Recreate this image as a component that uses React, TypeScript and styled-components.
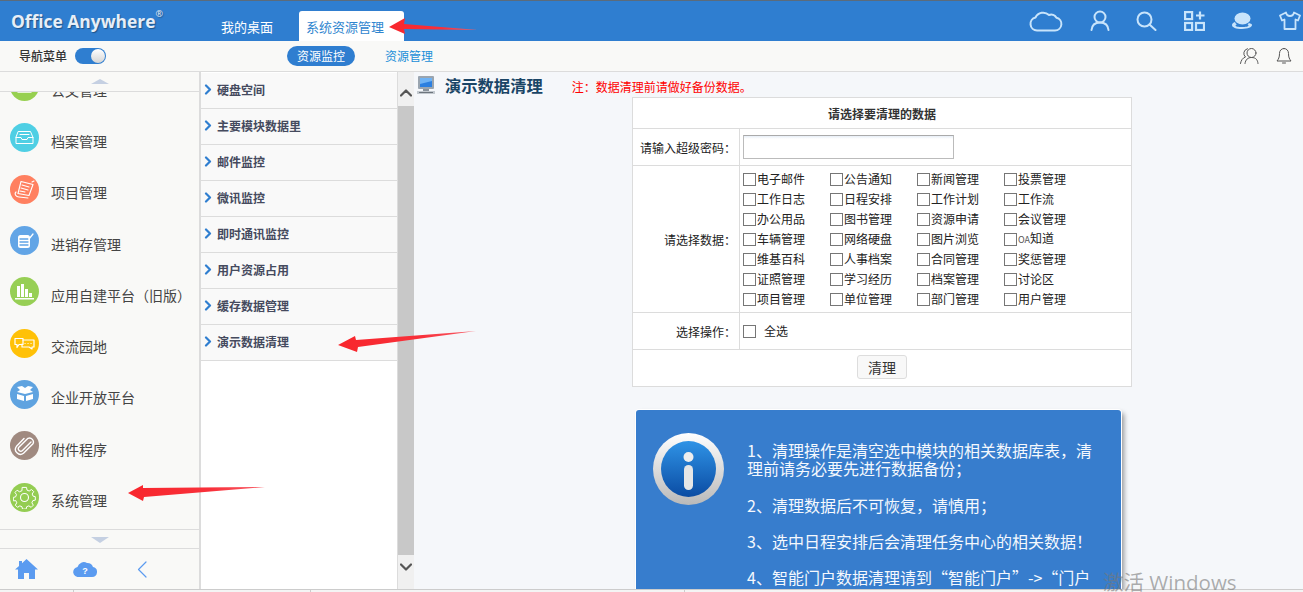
import React from "react";
import styled, { createGlobalStyle } from "styled-components";

const Global = createGlobalStyle`
  html, body { margin: 0; padding: 0; height: 100%; overflow: hidden; background: #f5f7fa; }
  body { font-family: "Noto Sans CJK SC", "Liberation Sans", sans-serif; font-size: 12px; color: #333; text-spacing-trim: space-all; }
  * { box-sizing: border-box; }
`;

const Page = styled.div`
  position: relative; width: 1303px; height: 592px; overflow: hidden;
  display: flex; flex-direction: column; border-top: 1px solid #5b6b7b;
`;
const Header = styled.header`
  height: 40px; flex: none; background: #2f7ed0; display: flex; align-items: flex-end;
`;
const Brand = styled.div`
  width: 206px; height: 40px; padding-left: 11px; display: flex; align-items: flex-start; padding-top: 7px;
  font-family: "Open Sans", "Liberation Sans", sans-serif; font-weight: 700; font-size: 17.4px; line-height: 26px;
  color: #e6eef8; text-shadow: 1px 1px 1px rgba(0,0,0,.35);
  sup { font-size: 9px; font-weight: 400; line-height: 10px; margin-top: 1px; }
`;
const Tab = styled.div<{ $active?: boolean }>`
  height: 30px; display: flex; align-items: center; font-size: 13px; line-height: 30px; padding-top: 1px;
  border-radius: 3px 3px 0 0;
  ${p => p.$active
    ? "width:105px; padding-left:7px; margin-left:11px; background:#fff; color:#2f86cf;"
    : "padding-left:15px; padding-right:15px; color:#fff;"}
`;
const HeaderIcons = styled.div`
  margin-left: auto; height: 40px; padding-right: 2px; display: flex; align-items: center; gap: 26.6px;
  color: #c8e4fb; padding-bottom: 1px;
  svg { display: block; }
`;
const SubBar = styled.div`
  height: 31px; flex: none; background: #f9f9f7; border-bottom: 1px solid #dcdcdc;
  display: flex; align-items: center; padding-left: 19px; padding-bottom: 1px;
`;
const NavLabel = styled.span`font-size: 12px; color: #333; font-weight: 500;`;
const Toggle = styled.div`
  width: 31px; height: 16px; margin-left: 8px; border-radius: 8px; background: #2f7ed0; position: relative;
  &::after { content: ""; position: absolute; right: 1px; top: 1px; width: 14px; height: 14px; border-radius: 50%;
    background: linear-gradient(#fff, #d5d5d5); }
`;
const Pill = styled.div<{ $active?: boolean }>`
  font-size: 12px; line-height: 20px; height: 20px; border-radius: 10px; text-align: center;
  ${p => p.$active
    ? "width:68px; margin-left:181px; background:#2f7ed0; color:#fff;"
    : "margin-left:30px; color:#1a8fd8;"}
`;
const SubIcons = styled.div`
  margin-left: auto; padding-right: 11px; display: flex; gap: 17px; color: #555; svg { display: block; }
`;
const Body = styled.div`flex: 1; min-height: 0; display: flex;`;

const Side = styled.aside`
  width: 200px; flex: none; background: #f9f9f7; border-right: 1px solid #dcdcdc; display: flex; flex-direction: column;
`;
const ArrowZone = styled.div<{ $down?: boolean }>`
  flex: none; display: flex; justify-content: center;
  ${p => p.$down
    ? "height:19px; padding-top:7px; border-top:1px solid #dcdcdc;"
    : "height:20px; padding-top:7px; border-bottom:1px solid #dcdcdc;"}
`;
const Tri = styled.div<{ $down?: boolean }>`
  width: 0; height: 0; border-left: 9px solid transparent; border-right: 9px solid transparent;
  ${p => p.$down ? "border-top: 6px solid #c5d0e2;" : "border-bottom: 5px solid #c5d0e2;"}
`;
const MenuWindow = styled.div`flex: 1; min-height: 0; overflow: hidden;`;
const MenuScroll = styled.div`margin-top: -28px;`;
const MenuItem = styled.div`
  height: 51.3px; display: flex; align-items: center; padding-left: 10px; font-size: 14px; color: #444;
`;
const MenuIcon = styled.div<{ $c: string }>`
  width: 29px; height: 29px; border-radius: 50%; background: ${p => p.$c}; margin: 0 12px 6px 0; flex: none;
  display: flex; align-items: center; justify-content: center; color: #fff;
  svg { display: block; }
`;
const Foot = styled.div`
  height: 41px; flex: none; border-top: 1px solid #dcdcdc; display: flex; align-items: center;
  padding-left: 15px; gap: 35px; color: #5b9bf0; svg { display: block; }
`;
const FootBack = styled.div`margin-left: 5px;`;

const Mid = styled.nav`
  width: 198px; flex: none; background: #fff; border-left: 1px solid #dcdcdc; border-right: 1px solid #dcdcdc; padding-top: 1px;
`;
const MidRow = styled.div`
  height: 36px; background: #f9f9f9; border-bottom: 1px solid #dcdcdc; display: flex; align-items: center;
  padding: 0 0 2px 3px; gap: 5px; font-size: 12px; font-weight: 700; color: #454a5e;
  svg { display: block; color: #2f7ed0; }
`;
const Scroll = styled.div`
  width: 16px; flex: none; background: #f0f0f0; display: flex; flex-direction: column; color: #555;
`;
const ScrollBtn = styled.div<{ $down?: boolean }>`
  height: 34px; flex: none; display: flex; align-items: center; justify-content: center; svg { display: block; }
  ${p => p.$down ? "padding-bottom:10px;" : "padding-top:8px;"}
`;
const ScrollThumb = styled.div`flex: 1; background: #c8c8c8;`;

const Main = styled.main`flex: 1; min-width: 0; background: #f5f7fa; overflow: hidden;`;
const TitleRow = styled.div`
  height: 25px; display: flex; align-items: center; padding-left: 3px; svg { display: block; }
`;
const Title = styled.h1`
  margin: 0 0 0 10px; font-size: 16.300px; font-weight: 700; color: #1a4566; line-height: 24px;
`;
const Note = styled.span`margin: 3px 0 0 29px; font-size: 12px; color: #f00;`;
const Table = styled.table`
  border-collapse: collapse; table-layout: fixed; width: 500px; margin-left: 218px; background: #fff; font-size: 12px; color: #222;
  td, th { border: 1px solid #dcdcdc; padding: 0; }
`;
const LabelCol = styled.col`width: 107px;`;
const HeadCell = styled.th`height: 31px; font-weight: 700; text-align: center; font-size: 12px; color: #333;`;
const LabelCell = styled.td`text-align: right; padding-right: 3px !important;`;
const Row = styled.tr<{ $h: number }>`height: ${p => p.$h}px;`;
const ValueCell = styled.td`padding-left: 3px !important;`;
const Pwd = styled.input`
  display: block; width: 211px; height: 24px; border: 1px solid #bbb; border-top-color: #aaa; background: linear-gradient(#e8eff7, #fff 3px); outline: 0;
`;
const CheckGrid = styled.div`display: grid; grid-template-columns: repeat(4, 87px); grid-auto-rows: 20px;`;
const CheckItem = styled.label`display: flex; align-items: center; font-size: 12px; line-height: 20px; color: #222;`;
const Box = styled.input`
  appearance: none; width: 13px; height: 13px; margin: 1px 1px 0 0; border: 1px solid #767676; background: #fff; flex: none;
`;
const SmallLatin = styled.span`font-size: 9px; color: #555;`;
const AllLabel = styled(CheckItem)`gap: 7px;`;
const ButtonCell = styled.td`text-align: center; padding-bottom: 2px !important;`;
const ClearBtn = styled.button`
  width: 50px; height: 24px; border: 1px solid #ddd; border-radius: 3px; background: #f8f8f8; color: #333;
  font-family: inherit; font-size: 14px; line-height: 20px; padding: 0; display: inline-block; vertical-align: middle;
`;
const InfoBox = styled.section`
  width: 485px; margin: 23px 0 0 222px; height: 260px; background: #377dcd; border-radius: 3px;
  box-shadow: 0 0 0 1px #fff, 3px 3px 5px rgba(0,0,0,.4); display: flex; padding: 23px 0 0 17px; color: #fff;
`;
const InfoIcon = styled.div`width: 70px; flex: none; svg { display: block; }`;
const InfoText = styled.div`
  margin: 8px 0 0 24px; width: 350px; font-size: 16px; line-height: 18.2px; color: #f4f8fd; white-space: nowrap;
`;
const BottomBar = styled.div`
  height: 3px; flex: none; background: #f4f4f4; border-top: 1px solid #ccc; display: flex;
`;
const BottomCell = styled.div<{ $w: number }>`width: ${p => p.$w}px; border-right: 1px solid #ccc;`;
const Watermark = styled.div`
  position: absolute; left: 1103px; top: 569px; font-size: 20.500px; line-height: 24px; color: rgba(120,120,120,.6);
  font-family: "Open Sans", "Noto Sans CJK SC", sans-serif; white-space: nowrap;
`;
const Annotation = styled.svg`position: absolute; left: 0; top: -1px; pointer-events: none;`;

const Ic = ({ w, h, children, sw = 2 }: { w: number; h: number; children: React.ReactNode; sw?: number }) => (
  <svg width={w} height={h} viewBox={`0 0 ${w} ${h}`} fill="none" stroke="currentColor" strokeWidth={sw} strokeLinecap="round" strokeLinejoin="round">{children}</svg>
);

const menu: { t: string; c: string; i: React.ReactNode }[] = [
  { t: "公文管理", c: "#97d050", i: <Ic w={17} h={17} sw={1.5}><rect x="2" y="3" width="13" height="11" /><path d="M2 8h13" /></Ic> },
  { t: "档案管理", c: "#4fcfe4", i: <Ic w={19} h={15} sw={1}><path d="M3.500 1.500h12l2.500 6v6H1v-6z" /><path d="M1 7.500h5l1 2h5l1-2h5" /><path d="M5 4.500h9" /></Ic> },
  { t: "项目管理", c: "#ff8060", i: <Ic w={21} h={19} sw={1.1}><path d="M7 1.500l12 3-4 11-11-2z" /><path d="M8 5l7 2M7 8l7 2M6 11l5 1" /><path d="M2 12c-2 2 0 5 3 5l9 1" /><path d="M18 2l2-1" /></Ic> },
  { t: "进销存管理", c: "#62a5e6", i: <Ic w={18} h={18} sw={1.3}><rect x="2" y="3" width="12" height="13" rx="2.500" fill="#fff" stroke="none" /><path d="M4 7h8M4 10h8M4 13h8" stroke="#62a5e6" /><path d="M13 7l4-5" stroke="#fff" /></Ic> },
  { t: "应用自建平台（旧版）", c: "#97cf55", i: <svg width="19" height="17" viewBox="0 0 19 17" fill="#fff"><path d="M2 3h3v11H2zM6 1h3v13H6zM10 6h3v8h-3zM14 10h3v4h-3zM0 15h19v1.500H0z" /></svg> },
  { t: "交流园地", c: "#ffc107", i: <Ic w={21} h={13} sw={1.2}><path d="M1 1.500h8v6H5l-2 3v-3H1z" /><path d="M9 3h11v7h-2v2l-3-2H8V7" /><path d="M11 6.500h.1M14 6.500h.1M17 6.500h.1" /></Ic> },
  { t: "企业开放平台", c: "#5fa3e0", i: <svg width="20" height="18" viewBox="0 0 20 18" fill="#fff"><path d="M2 2l5-1 3 2 3-2 5 1-3 3 3 2-8 2-8-2 3-2z" /><path d="M2 9l7 2v5l-7-2zM18 9l-7 2v5l7-2z" /></svg> },
  { t: "附件程序", c: "#a08a80", i: <Ic w={21} h={21} sw={1.4}><path d="M17 7l-8.500 8.500a2.400 2.400 0 0 1-3.400-3.400L14 3.300a4 4 0 0 1 5 5.500l-9.500 9.500a5 5 0 0 1-7-7L10 3.500" /></Ic> },
  { t: "系统管理", c: "#94cd52", i: <Ic w={23} h={23} sw={1.1}><path d="M9.300 .3h4.400l.6 3 2.400 1 2.600-1.700 2.400 2.400-1.700 2.600 1 2.400 2.500.6v3.800l-2.800.6-1 2.400 1.600 2.600-2.400 2.400-2.600-1.600-2.400 1-.6 2.600H9.300l-.6-2.600-2.400-1-2.600 1.600-2.400-2.400 1.600-2.600-1-2.400L-.9 15.200v-3.800l2.500-.6 1-2.400-1.700-2.600 2.400-2.400 2.600 1.700 2.400-1z" transform="translate(1.150 1.150) scale(.9)" /><circle cx="11.500" cy="11.500" r="4" /></Ic> },
];

const midRows = ["硬盘空间", "主要模块数据里", "邮件监控", "微讯监控", "即时通讯监控", "用户资源占用", "缓存数据管理", "演示数据清理"];
const modules = [
  "电子邮件", "公告通知", "新闻管理", "投票管理",
  "工作日志", "日程安排", "工作计划", "工作流",
  "办公用品", "图书管理", "资源申请", "会议管理",
  "车辆管理", "网络硬盘", "图片浏览", "OA知道",
  "维基百科", "人事档案", "合同管理", "奖惩管理",
  "证照管理", "学习经历", "档案管理", "讨论区",
  "项目管理", "单位管理", "部门管理", "用户管理",
];

export default function App() {
  return (
    <>
      <Global />
      <Page lang="zh-CN">
        <Header>
          <Brand>Office Anywhere<sup>®</sup></Brand>
          <Tab>我的桌面</Tab>
          <Tab $active>系统资源管理</Tab>
          <HeaderIcons>
            <Ic w={35} h={23}><path d="M9 21.500h18a6.500 6.500 0 0 0 1.500-12.800A6 6 0 0 0 21 6 8.500 8.500 0 0 0 7.500 8.500 6.600 6.600 0 0 0 9 21.500z" /></Ic>
            <Ic w={20} h={21}><circle cx="10" cy="7" r="5.500" /><path d="M1.500 20c.5-5 4-7.500 8.500-7.500s8 2.500 8.500 7.500" /></Ic>
            <Ic w={21} h={20}><circle cx="8.500" cy="8.500" r="7" /><path d="M13.500 13.500l6 5.500" /></Ic>
            <svg width="21" height="20" viewBox="0 0 21 20" fill="none" stroke="currentColor" strokeWidth="2.200"><rect x="1.100" y="1.100" width="7" height="7" /><rect x="1.100" y="12" width="7" height="7" /><rect x="12" y="12" width="8" height="7" /><path d="M16 0.500v8M12 4.500h8.500" /></svg>
            <svg width="21" height="18" viewBox="0 0 21 18" fill="currentColor"><ellipse cx="11.500" cy="6.500" rx="8" ry="6" /><path d="M1 13c0-1.500 1.300-2.500 3-3 .4 1.200 1 2 2 2.600-.8.200-1.400.400-1.500.800 0 1 3 1.600 6.500 1.600s6.500-.6 6.500-1.600c0-.4-.5-.6-1-.8l1.500-1.500c1.500.5 3 1 3 2 0 2.200-4 3.900-10 3.900S1 15.500 1 13z" /></svg>
            <Ic w={22} h={19} sw={1.8}><path d="M7 1.500L1 4.500l2 5 2.500-1v9.500h11V8.500l2.500 1 2-5-6-3c-.5 2.500-2 3.500-4 3.500s-3.500-1-4-3.500z" /></Ic>
          </HeaderIcons>
        </Header>
        <SubBar>
          <NavLabel>导航菜单</NavLabel>
          <Toggle />
          <Pill $active>资源监控</Pill>
          <Pill>资源管理</Pill>
          <SubIcons>
            <Ic w={19} h={18} sw={1}><circle cx="11.500" cy="6" r="4.500" /><path d="M7.500 1.700A4.800 4.800 0 0 0 5.500 10C2.500 11 1 13.500.5 16.500M18 16.500c-.3-3.500-2-6-6.500-6-3.500 0-6 2-6.500 6" /></Ic>
            <Ic w={16} h={18} sw={1}><path d="M8 1.500c-3 0-4.500 2.400-4.500 5 0 4-1 5.500-2.500 7.500h14c-1.500-2-2.500-3.500-2.500-7.500 0-2.600-1.500-5-4.500-5zM6.500 16h3" /></Ic>
          </SubIcons>
        </SubBar>
        <Body>
          <Side>
            <ArrowZone><Tri /></ArrowZone>
            <MenuWindow>
              <MenuScroll>
                {menu.map(m => (
                  <MenuItem key={m.t}><MenuIcon $c={m.c}>{m.i}</MenuIcon>{m.t}</MenuItem>
                ))}
              </MenuScroll>
            </MenuWindow>
            <ArrowZone $down><Tri $down /></ArrowZone>
            <Foot>
              <svg width="23" height="20" viewBox="0 0 23 20" fill="currentColor"><path d="M11.500 0L23 10.500h-3V20h-6v-6H9v6H3v-9.500H0L4 7V2h3v2.300z" /></svg>
              <svg width="24" height="16" viewBox="0 0 24 16" fill="currentColor"><path d="M6 16h13a5 5 0 0 0 1-9.900A6 6 0 0 0 14 2 6.500 6.500 0 0 0 4.500 6 5 5 0 0 0 6 16z" /><text x="12" y="13" textAnchor="middle" fontSize="9" fontWeight="700" fill="#fff" fontFamily="Liberation Sans">?</text></svg>
              <FootBack><Ic w={10} h={17} sw={1.200}><path d="M9 1L1.500 8.500 9 16" /></Ic></FootBack>
            </Foot>
          </Side>
          <Mid>
            {midRows.map(r => (
              <MidRow key={r}>
                <Ic w={8} h={11} sw={2.200}><path d="M2 1.500L6 5.500 2 9.500" /></Ic>
                {r}
              </MidRow>
            ))}
          </Mid>
          <Scroll>
            <ScrollBtn><Ic w={12} h={8} sw={2.200}><path d="M1 6.500L6 1.500l5 5" /></Ic></ScrollBtn>
            <ScrollThumb />
            <ScrollBtn $down><Ic w={12} h={8} sw={2.200}><path d="M1 1.500l5 5 5-5" /></Ic></ScrollBtn>
          </Scroll>
          <Main>
            <TitleRow>
              <svg width="18" height="18" viewBox="0 0 18 18"><rect x="1" y="0" width="16" height="13" rx="1" fill="#9aa5b0" /><rect x="3" y="2" width="12" height="9" fill="#2b7fe0" /><path d="M3 2h12v3L3 8z" fill="#6fb3f5" /><rect x="6" y="13" width="6" height="2" fill="#8a939c" /><rect x="0" y="15" width="18" height="3" fill="#c2c8ce" /><path d="M2 16.500h14" stroke="#6d757d" /></svg>
              <Title>演示数据清理</Title>
              <Note>注：数据清理前请做好备份数据。</Note>
            </TitleRow>
            <Table>
              <colgroup><LabelCol /><col /></colgroup>
              <tbody>
                <tr><HeadCell colSpan={2}>请选择要清理的数据</HeadCell></tr>
                <Row $h={37}>
                  <LabelCell>请输入超级密码：</LabelCell>
                  <ValueCell><Pwd type="password" /></ValueCell>
                </Row>
                <Row $h={147}>
                  <LabelCell>请选择数据：</LabelCell>
                  <ValueCell>
                    <CheckGrid>
                      {modules.map(m => (
                        <CheckItem key={m}>
                          <Box type="checkbox" />
                          {m === "OA知道" ? <span><SmallLatin>OA</SmallLatin>知道</span> : m}
                        </CheckItem>
                      ))}
                    </CheckGrid>
                  </ValueCell>
                </Row>
                <Row $h={37}>
                  <LabelCell>选择操作：</LabelCell>
                  <ValueCell><AllLabel><Box type="checkbox" />全选</AllLabel></ValueCell>
                </Row>
                <Row $h={37}>
                  <ButtonCell colSpan={2}><ClearBtn type="button">清理</ClearBtn></ButtonCell>
                </Row>
              </tbody>
            </Table>
            <InfoBox>
              <InfoIcon>
                <svg width="71" height="72" viewBox="0 0 71 72">
                  <defs>
                    <linearGradient id="ring" x1="0" y1="0" x2="0" y2="1"><stop offset="0" stopColor="#fff" /><stop offset="1" stopColor="#b9b9b9" /></linearGradient>
                    <linearGradient id="core" x1="0" y1="0" x2="0" y2="1"><stop offset="0" stopColor="#2f93e6" /><stop offset="1" stopColor="#0b4ca3" /></linearGradient>
                  </defs>
                  <ellipse cx="35.500" cy="36" rx="35.500" ry="36" fill="url(#ring)" />
                  <ellipse cx="35.500" cy="36" rx="27.500" ry="28" fill="url(#core)" />
                  <circle cx="35.500" cy="24" r="5" fill="#eee" />
                  <rect x="31" y="32" width="9" height="25" rx="4.500" fill="#e6e6e6" />
                </svg>
              </InfoIcon>
              <InfoText>
                1、清理操作是清空选中模块的相关数据库表，清<br />
                理前请务必要先进行数据备份；<br /><br />
                2、清理数据后不可恢复，请慎用；<br /><br />
                3、选中日程安排后会清理任务中心的相关数据！<br /><br />
                4、智能门户数据清理请到“智能门户”-&gt;“门户<br />
                管理”中操作！
              </InfoText>
            </InfoBox>
          </Main>
        </Body>
        <BottomBar>
          <BottomCell $w={74} />
          <BottomCell $w={237} />
          <BottomCell $w={374} />
        </BottomBar>
        <Watermark>激活 Windows</Watermark>
        <Annotation width="1303" height="592" viewBox="0 0 1303 592">
          <defs>
            <linearGradient id="a1" x1="0" y1="0" x2="1" y2="0"><stop offset="0" stopColor="#f8262c" /><stop offset=".6" stopColor="#f8303a" /><stop offset="1" stopColor="#f8606a" /></linearGradient>
            <linearGradient id="a2" x1="1" y1="0" x2="0" y2="0"><stop offset="0" stopColor="#f8606a" /><stop offset=".4" stopColor="#f8303a" /><stop offset="1" stopColor="#f8262c" /></linearGradient>
          </defs>
          <path d="M389 27L405 18 404 24 478 30 404 29 405 34z" fill="url(#a1)" />
          <path d="M338 345L355 336 356 340 476 331 358 347 357 352z" fill="url(#a2)" />
          <path d="M128 493L143 485 143 488 265 487 144 497 143 501z" fill="url(#a2)" />
        </Annotation>
      </Page>
    </>
  );
}
